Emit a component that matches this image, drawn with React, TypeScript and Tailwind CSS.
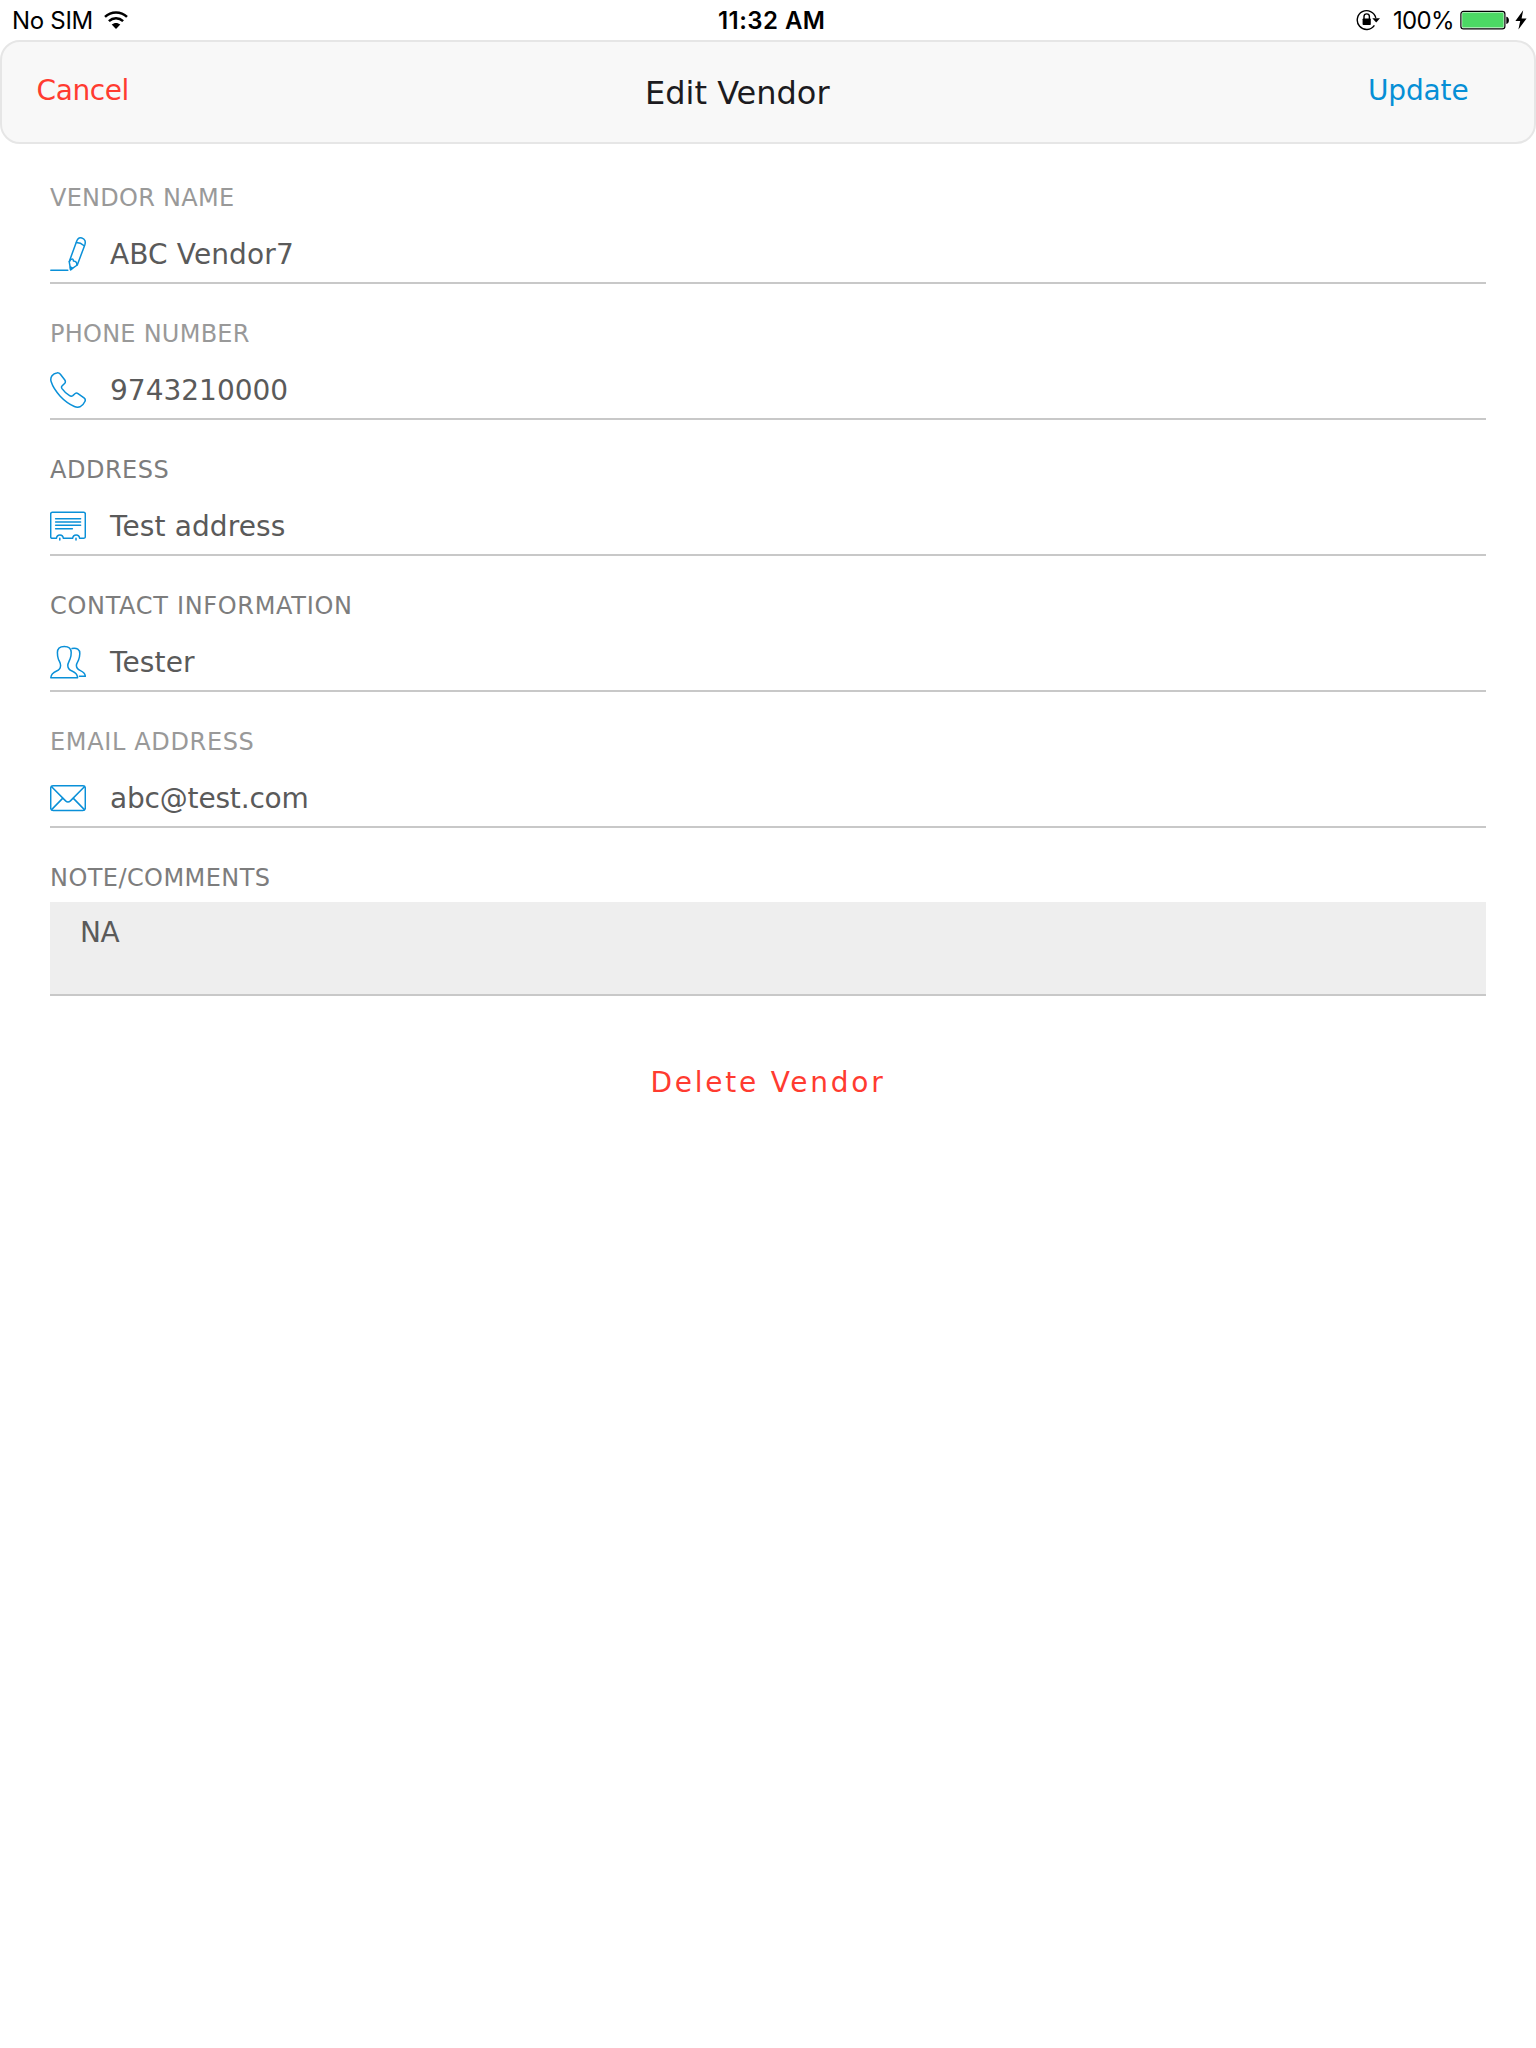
import type { ReactNode } from "react";

function Icon({ children }: { children: ReactNode }) {
  return (
    <svg
      width="36"
      height="36"
      viewBox="0 0 36 36"
      fill="none"
      stroke="#0a90d8"
      strokeWidth="1.5"
      strokeLinecap="round"
      strokeLinejoin="round"
      className="shrink-0"
    >
      {children}
    </svg>
  );
}

const PencilIcon = () => (
  <Icon>
    <path d="M.8 34.3H17.8" />
    <path d="M26.2 6.4C27.4 2.6 29.5 1.3 31.8 2C35 3 35.9 5.6 34.8 8.9L27.3 29L20.6 33.6L19.2 25.7L26.2 6.4Z" />
    <path d="M26.3 6.6C28.5 6.6 32.2 8 34.2 9.7" />
    <path d="M19.4 25.6C21 22 23.4 22.2 23.4 25C26 25.2 27.2 26.6 26.8 29.2" />
    <path d="M20.3 31L22.6 32.2L20.6 33.8Z" fill="#0a90d8" />
  </Icon>
);

const PhoneIcon = () => (
  <Icon>
    <path d="M6.8.9C8.4.6 9.5 1.2 10.4 2.3L14.8 8C15.6 9.2 15.6 10.2 14.8 11.2L12 14C11.2 14.8 11.4 15.6 12 16.6C14 19.4 16.8 22 19.6 23.7C20.8 24.4 21.8 24.4 22.8 23.6L25.2 21.5C26.2 20.8 27 20.9 28 21.6L34 25.8C35.3 26.8 35.6 28 34.9 29.5C33.8 32 32.3 33.6 30 34.8C28 35.6 26.2 35.3 24.4 34.5C18.8 32 14.3 28.6 10.2 24.2C6.4 20 3 15.6 1.2 9.8C.4 7.5.7 5.6 2 3.8C3.2 2.2 4.8 1.2 6.8.9Z" />
  </Icon>
);

const AddressIcon = () => (
  <Icon>
    <path d="M6.5 30.3H2.4Q.7 30.3 .7 28.7V6Q.7 4.3 2.4 4.3H33.6Q35.3 4.3 35.3 6V28.7Q35.3 30.3 33.6 30.3H29.6C29.2 25.8 23.1 25.8 22.7 30.3H13.3C12.9 25.8 6.9 25.8 6.5 30.3Z" stroke="none" />
    <path d="M6.5 30.3H2.4Q.7 30.3 .7 28.7V6Q.7 4.3 2.4 4.3H33.6Q35.3 4.3 35.3 6V28.7Q35.3 30.3 33.6 30.3H29.6C29.2 25.8 23.1 25.8 22.7 30.3H13.3C12.9 25.8 6.9 25.8 6.5 30.3Z" />
    <path d="M5.6 10.7H30.6M5.6 14H30.6M5.6 17.3H30.6M5.6 20.7H22.4" />
    <path d="M9.8 30.2V32M26 30.2V32" />
  </Icon>
);

const ContactIcon = () => (
  <Icon>
    <path d="M14.3 2.4C10 2.4 7.4 4.8 7.4 8.6C7.4 13.4 8 14 8.6 15.6C9.6 18 10.6 19 10.6 21.4C10.5 24.6 9.6 25.8 6.6 27C2.6 28.7 1 30.2.8 33.8H27.6C27.6 30.3 26 28.7 22 27C19 25.7 17.8 24.4 17.8 21.4C17.8 19 19 17.8 19.8 15.6C20.4 14 21.2 13.2 21.2 8.6C21.2 4.8 18.6 2.4 14.3 2.4Z" />
    <path d="M22 4.4C26.8 3.4 30 5.6 29.8 9.8C29.7 13.2 29.3 14.4 28.5 16.2C27.4 18.2 26.4 19.4 26.4 21.6C26.5 24.2 27.6 25.4 30.4 26.6C34 28.2 35.2 29.4 35.3 32.3H29.4" />
  </Icon>
);

const MailIcon = () => (
  <Icon>
    <rect x=".7" y="5.8" width="34.6" height="24.6" rx="2.4" />
    <path d="M1.6 6.8L15.6 20.9Q18 23.2 20.4 20.9L34.4 6.8" />
    <path d="M1.6 29.6L12.6 18.4M34.4 29.6L23.4 18.4" />
  </Icon>
);

type FieldProps = {
  label: string;
  value: string;
  icon: ReactNode;
  labelClass: string;
  valueClass: string;
};

function Field({ label, value, icon, labelClass, valueClass }: FieldProps) {
  return (
    <div className="h-[136px] border-b-2 border-[#c8c8c8] pt-9">
      <div className={`h-7 text-2xl leading-7 ${labelClass}`}>{label}</div>
      <div className="mt-3.5 flex h-14 items-center gap-6">
        {icon}
        <div className={`pt-0.5 text-[28px] leading-[54px] text-[#5a5a5a] ${valueClass}`}>{value}</div>
      </div>
    </div>
  );
}

function StatusBar() {
  return (
    <div className="grid h-10 grid-cols-[718px_1fr_auto] items-center font-['Inter',sans-serif] text-2xl leading-[38px] text-black">
      <div className="flex items-center pl-3">
        <span className="pt-0.5 tracking-[-0.3px]">No SIM</span>
        <svg width="24" height="20" viewBox="0 0 24 20" className="ml-[11.5px]" fill="none" stroke="#000">
          <path d="M1 6.9C7.2 .9 16.8 .9 23 6.9" strokeWidth="2.5" />
          <path d="M4.9 11.1C9 7.3 15 7.3 19.1 11.1" strokeWidth="2.5" />
          <path d="M12 19L7.7 14.6C10.2 12.4 13.8 12.4 16.3 14.6Z" fill="#000" stroke="none" />
        </svg>
      </div>
      <span className="pt-0.5 font-semibold tracking-[0.45px]">11:32 AM</span>
      <div className="flex items-center pr-[9px]">
        <svg width="24" height="22" viewBox="0 0 24 22" fill="none" stroke="#000" strokeWidth="1.4">
          <path d="M19.8 8.9A9.4 9.4 0 1 0 18.4 16.4" />
          <path d="M16.3 9.2H24L20.2 13.4Z" fill="#000" stroke="none" />
          <rect x="6.6" y="9.4" width="8.2" height="6.6" rx=".8" fill="#000" stroke="none" />
          <path d="M8 10V7.6A2.7 2.7 0 0 1 13.4 7.6V10" />
        </svg>
        <span className="ml-[13px] w-[67px] pt-0.5 tracking-[-0.65px]">100%</span>
        <svg width="50" height="20" viewBox="0 0 50 20">
          <rect x=".9" y="1.3" width="44" height="17.6" rx="2.6" fill="#fff" stroke="#000" strokeWidth="1.2" />
          <rect x="2.2" y="2.6" width="41.4" height="15" rx="1.2" fill="#4cd964" />
          <path d="M46.3 6.7C49.8 6.9 49.8 13.7 46.3 13.9Z" fill="#000" />
        </svg>
        <svg width="12" height="20" viewBox="0 0 12 20" className="ml-[5px]">
          <path d="M8.2 .2L.4 11H5.2L3.4 19.6L11.6 8.4H6.6Z" fill="#000" />
        </svg>
      </div>
    </div>
  );
}

export default function App() {
  return (
    <div className="h-[2048px] w-[1536px] overflow-hidden bg-white font-['DejaVu_Sans',sans-serif]">
      <StatusBar />
      <header className="grid h-[104px] grid-cols-[643px_1fr_auto] items-center rounded-[20px] border-2 border-[#e6e6e6] bg-[#f8f8f8]">
        <button className="pb-0.5 pl-[34.5px] text-left text-[28px] leading-9 tracking-[-0.4px] text-[#ff3b30]">Cancel</button>
        <h1 className="pt-0.5 text-[32px] leading-10 text-[#1c1b20]">Edit Vendor</h1>
        <button className="pr-[65.5px] pb-0.5 text-[28px] leading-9 tracking-[-0.13px] text-[#068fd6]">Update</button>
      </header>

      <main className="px-[50px] pt-1">
        <Field label="VENDOR NAME" value="ABC Vendor7" icon={<PencilIcon />} labelClass="tracking-[0.27px] text-[#999]" valueClass="tracking-[0.12px]" />
        <Field label="PHONE NUMBER" value="9743210000" icon={<PhoneIcon />} labelClass="tracking-[0.25px] text-[#999]" valueClass="" />
        <Field label="ADDRESS" value="Test address" icon={<AddressIcon />} labelClass="tracking-[0.5px] text-[#7d7d7d]" valueClass="tracking-[0.12px]" />
        <Field label="CONTACT INFORMATION" value="Tester" icon={<ContactIcon />} labelClass="tracking-[0.68px] text-[#7d7d7d]" valueClass="tracking-[0.15px]" />
        <Field label="EMAIL ADDRESS" value="abc@test.com" icon={<MailIcon />} labelClass="tracking-[0.65px] text-[#999]" valueClass="tracking-[-0.18px]" />

        <div className="pt-9">
          <div className="h-7 text-2xl leading-7 tracking-[0.43px] text-[#7d7d7d]">NOTE/COMMENTS</div>
          <div className="mt-[10px] h-[94px] border-b-2 border-[#c8c8c8] bg-[#eee] pt-[13px] pl-[30px] text-[28px] leading-9 tracking-[-0.4px] text-[#5a5a5a]">
            NA
          </div>
        </div>

        <div className="flex justify-center pt-[69px]">
          <button className="text-[28px] leading-9 tracking-[2.75px] text-[#ff3b30]">Delete Vendor</button>
        </div>
      </main>
    </div>
  );
}
